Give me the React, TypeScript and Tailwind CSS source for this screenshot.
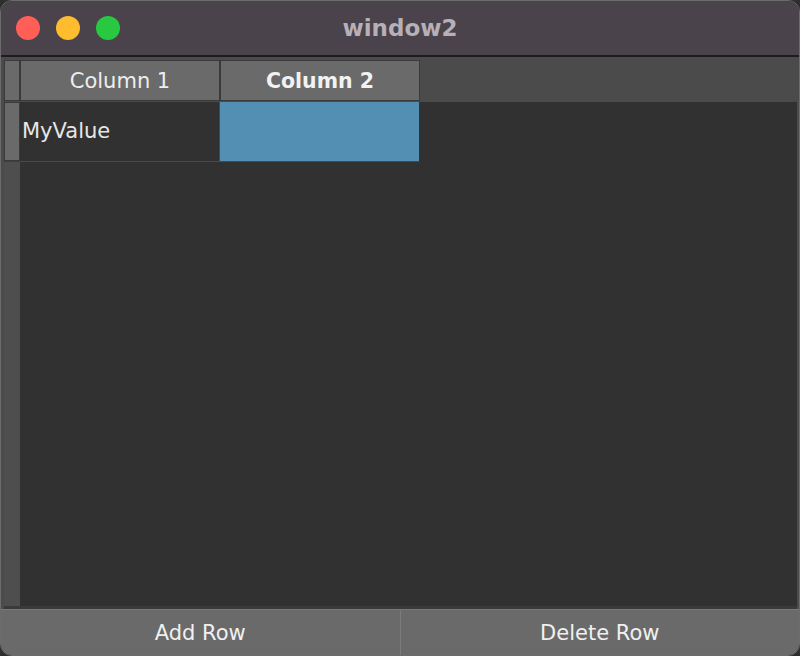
import React from "react";

export default function App() {
  const font = { fontFamily: '"DejaVu Sans", "Noto Sans", sans-serif' };
  return (
    <div className="w-[800px] h-[656px] bg-[#2e2e2e]" style={font}>
      <div className="w-full h-full flex flex-col rounded-[12px] overflow-hidden border border-[#6c6c6c]">
        {/* Title bar */}
        <div className="relative h-[56px] shrink-0 bg-[#4a434b] flex items-center justify-center border-b-2 border-[#1c1c1c]">
          <div className="absolute left-[15px] top-[15px] flex gap-[16px]">
            <div className="w-[24px] h-[24px] rounded-full bg-[#ff5f57]" />
            <div className="w-[24px] h-[24px] rounded-full bg-[#febc2e]" />
            <div className="w-[24px] h-[24px] rounded-full bg-[#28c840]" />
          </div>
          <span className="text-[23px] font-bold text-[#b7b0b8] leading-none">window2</span>
        </div>

        {/* Table pane */}
        <div className="flex-1 flex flex-col bg-[#4b4b4b] pl-[3px] pr-[2px]">
          {/* Header */}
          <div className="h-[45px] shrink-0 pt-[3px] flex items-start">
            <div className="w-[16px] h-[41px] bg-[#6a6a6a] border border-[#3a3a3a]" />
            <div className="w-[200px] h-[41px] bg-[#6a6a6a] border border-[#3a3a3a] flex items-center justify-center pt-[2px] text-[21px] text-[#ededed]">
              Column 1
            </div>
            <div className="w-[200px] h-[41px] bg-[#6a6a6a] border border-[#3a3a3a] flex items-center justify-center pt-[1px] text-[20.5px] font-bold text-[#f2f2f2]">
              Column 2
            </div>
          </div>
          {/* Body */}
          <div className="flex-1 flex">
            <div className="w-[16px] shrink-0 flex flex-col">
              <div className="h-[59px] bg-[#6a6a6a] border border-[#3a3a3a]" />
              <div className="h-[1px] bg-[#3e3e3e]" />
              <div className="flex-1 bg-[#4e4e4e]" />
            </div>
            <div className="flex-1 bg-[#313131] flex flex-col">
              <div className="h-[59px] flex">
                <div className="w-[199px] flex items-center pl-[2px] text-[21px] text-[#e6e6e6]">MyValue</div>
                <div className="w-[1px] bg-[#4a4a4a]" />
                <div className="w-[199px] bg-[#538fb3]" />
              </div>
              <div className="h-[1px] w-[399px] bg-[#4a4a4a]" />
            </div>
          </div>
          <div className="h-[3px] bg-[#3a3a3a]" />
        </div>

        {/* Buttons */}
        <div className="h-[46px] shrink-0 flex bg-[#6a6a6a] border-t border-[#7a7a7a]">
          <div className="flex-1 flex items-center justify-center pt-[3px] text-[21px] text-[#f0f0f0]">Add Row</div>
          <div className="w-[1px] bg-[#7c7c7c]" />
          <div className="flex-1 flex items-center justify-center pt-[3px] text-[21px] text-[#f0f0f0]">Delete Row</div>
        </div>
      </div>
    </div>
  );
}
